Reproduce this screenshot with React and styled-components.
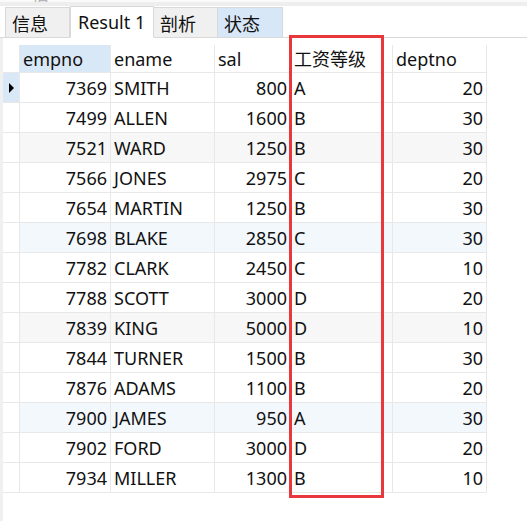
import React from "react";
import styled, { createGlobalStyle } from "styled-components";

const GlobalStyle = createGlobalStyle`
  html, body {
    margin: 0;
    padding: 0;
    background: #ffffff;
  }
  body {
    font-family: "Noto Sans", "Noto Sans CJK SC", sans-serif;
    color: #111;
  }
`;

const rows = [
    {empno: 7369, ename: "SMITH", sal: 800, grade: "A", deptno: 20, current: true},
    {empno: 7499, ename: "ALLEN", sal: 1600, grade: "B", deptno: 30},
    {empno: 7521, ename: "WARD", sal: 1250, grade: "B", deptno: 30, tint: "gray"},
    {empno: 7566, ename: "JONES", sal: 2975, grade: "C", deptno: 20},
    {empno: 7654, ename: "MARTIN", sal: 1250, grade: "B", deptno: 30},
    {empno: 7698, ename: "BLAKE", sal: 2850, grade: "C", deptno: 30, tint: "blue"},
    {empno: 7782, ename: "CLARK", sal: 2450, grade: "C", deptno: 10},
    {empno: 7788, ename: "SCOTT", sal: 3000, grade: "D", deptno: 20},
    {empno: 7839, ename: "KING", sal: 5000, grade: "D", deptno: 10, tint: "gray"},
    {empno: 7844, ename: "TURNER", sal: 1500, grade: "B", deptno: 30},
    {empno: 7876, ename: "ADAMS", sal: 1100, grade: "B", deptno: 20},
    {empno: 7900, ename: "JAMES", sal: 950, grade: "A", deptno: 30, tint: "blue"},
    {empno: 7902, ename: "FORD", sal: 3000, grade: "D", deptno: 20},
    {empno: 7934, ename: "MILLER", sal: 1300, grade: "B", deptno: 10},
];

const tints = {gray: "#f7f7f7", blue: "#f3f8fd"};

const Page = styled.div`
  position: relative;
  width: 527px;
  height: 521px;
  overflow: hidden;
  background: #fff;
`;

const TopStrip = styled.div`
  height: 6px;
  overflow: hidden;
  border-bottom: 4px solid #eeeeee;
  box-sizing: border-box;
  padding-left: 33px;
  background: #fafafa;
`;

const Ghost = styled.span`
  display: block;
  margin-top: -14px;
  font-size: 16px;
  line-height: 18px;
  color: #b5b5b5;
`;

const TabBar = styled.div`
  display: flex;
  align-items: flex-end;
  height: 32px;
  padding-left: 5px;
  border-bottom: 1px solid #d9d9d9;
  box-sizing: border-box;
`;

const Tab = styled.div`
  box-sizing: border-box;
  width: ${p => p.$w}px;
  height: ${p => (p.$active ? 32 : 30)}px;
  margin-bottom: ${p => (p.$active ? -1 : 0)}px;
  padding: 0 0 0 ${p => (p.$active ? 7 : 6)}px;
  display: flex;
  align-items: center;
  font-size: 18px;
  background: ${p => (p.$active ? "#ffffff" : p.$blue ? "#d8e7f7" : "#f0f0f0")};
  border: 1px solid #d9d9d9;
  border-bottom: ${p => (p.$active ? "1px solid #ffffff" : "none")};
  border-left: ${p => (p.$first || p.$active ? "1px solid #d9d9d9" : "none")};
  color: #111;
`;

const Body = styled.div`
  display: flex;
  height: 484px;
`;

const Gutter = styled.div`
  width: 3px;
  background: #f0f0f0;
`;

const Grid = styled.div`
  display: grid;
  grid-template-columns: 17px 91px 104px 76px 102px 94px;
  grid-auto-rows: 30px;
  grid-template-rows: 28px;
  margin-top: 7px;
  align-content: start;
  font-size: 18px;
`;

const Cell = styled.div`
  box-sizing: border-box;
  border-right: 1px solid #e8e8e8;
  border-bottom: 1px solid #e8e8e8;
  display: flex;
  align-items: center;
  justify-content: ${p => (p.$right ? "flex-end" : "flex-start")};
  padding: 0 ${p => (p.$right ? 3 : 0)}px 0 ${p => (p.$right ? 0 : 3)}px;
  background: ${p => p.$bg || "transparent"};
  white-space: nowrap;
  line-height: 1;
`;

const HeadCell = styled(Cell)`
  padding-left: 3px;
  background: ${p => (p.$sorted ? "#d9e8f7" : "#ffffff")};
`;

const Marker = styled(Cell)`
  justify-content: center;
  padding: 0;
  background: ${p => (p.$current ? "#d9e8f7" : "#ffffff")};
`;

const Triangle = styled.span`
  width: 0;
  height: 0;
  border-top: 5px solid transparent;
  border-bottom: 5px solid transparent;
  border-left: 5px solid #000;
`;

const Highlight = styled.div`
  position: absolute;
  left: 289px;
  top: 35px;
  width: 95px;
  height: 463px;
  box-sizing: border-box;
  border: 3px solid #e8383b;
  pointer-events: none;
`;

const columns = [
    {key: "empno", right: true},
    {key: "ename"},
    {key: "sal", right: true},
    {key: "grade", label: "工资等级"},
    {key: "deptno", right: true},
];

function App() {
    return (
        <Page>
            <GlobalStyle/>
            <TopStrip><Ghost>旧</Ghost></TopStrip>
            <TabBar>
                <Tab $w={65} $first>信息</Tab>
                <Tab $w={84} $active>Result 1</Tab>
                <Tab $w={64}>剖析</Tab>
                <Tab $w={65} $blue>状态</Tab>
            </TabBar>
            <Body>
                <Gutter/>
                <Grid>
                    <HeadCell/>
                    {columns.map((c, i) => (
                        <HeadCell key={c.key} $sorted={i === 0}>{c.label ?? c.key}</HeadCell>
                    ))}
                    {rows.map(r => (
                        <React.Fragment key={r.empno}>
                            <Marker $current={r.current}>{r.current ? <Triangle/> : null}</Marker>
                            {columns.map(c => (
                                <Cell key={c.key} $right={c.right} $bg={tints[r.tint]}>{r[c.key]}</Cell>
                            ))}
                        </React.Fragment>
                    ))}
                </Grid>
            </Body>
            <Highlight/>
        </Page>
    );
}

export default App;
